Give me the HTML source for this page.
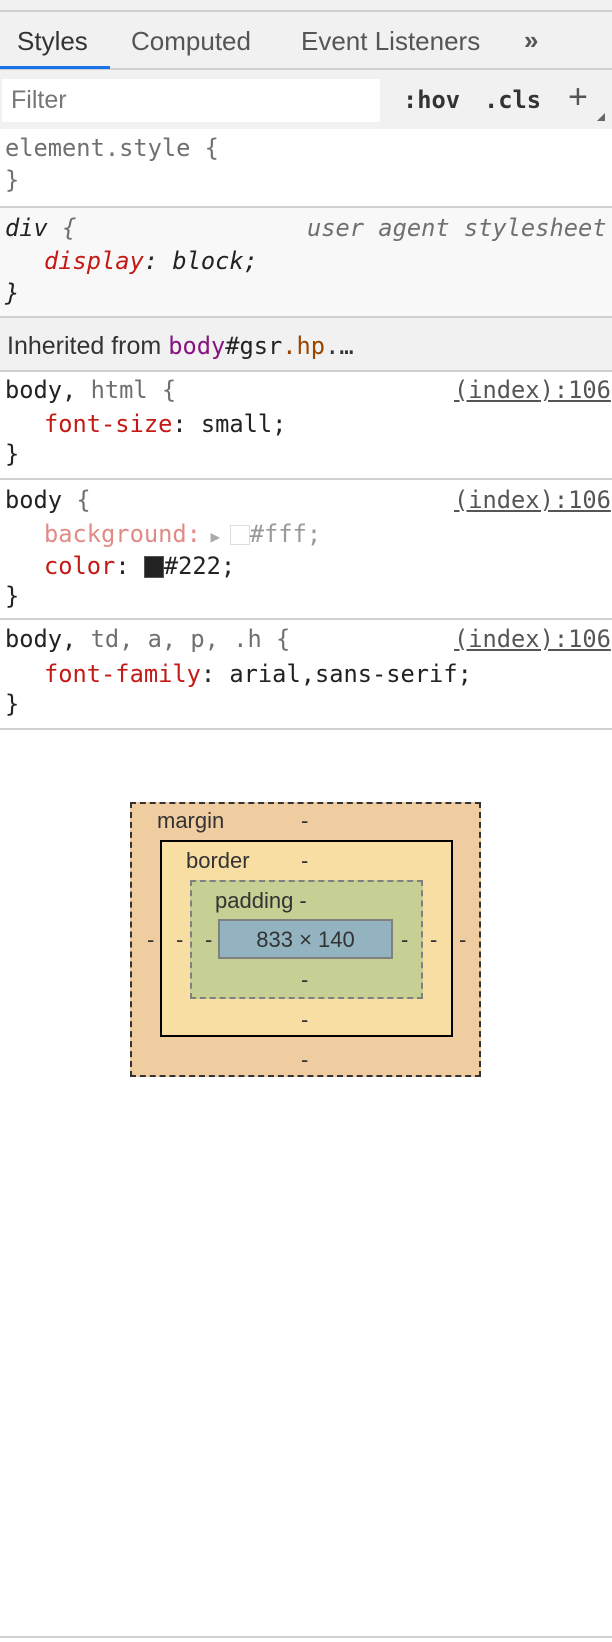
<!DOCTYPE html>
<html><head><meta charset="utf-8"><style>
*{margin:0;padding:0;box-sizing:border-box}
body{width:612px;height:1642px;background:#fff;position:relative;overflow:hidden;font-family:"Liberation Sans",Arial,sans-serif;color:#222}
.a{position:absolute;white-space:pre}
.m{font-family:"DejaVu Sans Mono","Liberation Mono",monospace;font-size:23.7px;line-height:32px}
.hl{position:absolute;left:0;width:612px;height:2px;background:#d0d0d0}
.red{color:#c41a16}.g{color:#707070}.k{color:#222}
.idx{color:#555;text-decoration:underline}
.bm{position:absolute;font-size:22px;color:#333;text-align:center}
</style></head><body>
<div class="a" style="left:0;top:0;width:612px;height:69px;background:#f1f1f1"></div>
<div class="hl" style="top:10px;height:2px;background:#cfcfcf"></div>
<div class="hl" style="top:68px"></div>
<div class="a" style="left:0;top:66px;width:110px;height:3px;background:#1a73e8"></div>
<div class="a" style="left:17px;top:26px;font-size:26px;color:#333">Styles</div>
<div class="a" style="left:131px;top:26px;font-size:26px;color:#555">Computed</div>
<div class="a" style="left:301px;top:26px;font-size:26px;color:#555">Event Listeners</div>
<div class="a" style="left:524px;top:25px;font-size:26px;font-weight:bold;color:#555">»</div>
<div class="a" style="left:0;top:70px;width:612px;height:59px;background:#f1f1f1"></div>
<div class="a" style="left:2px;top:79px;width:378px;height:43px;background:#fff"></div>
<div class="a" style="left:11px;top:86px;font-size:25px;color:#777">Filter</div>
<div class="a m" style="left:403px;top:84px;font-weight:bold;color:#333">:hov</div>
<div class="a m" style="left:484px;top:84px;font-weight:bold;color:#333">.cls</div>
<div class="a" style="left:568px;top:78px;font-size:34px;color:#555">+</div>
<div class="a" style="left:597px;top:113px;width:0;height:0;border-left:8px solid transparent;border-bottom:8px solid #666"></div>

<div class="a m g" style="left:5px;top:132px">element.style {</div>
<div class="a m g" style="left:5px;top:164px">}</div>
<div class="hl" style="top:206px"></div>
<div class="a" style="left:0;top:208px;width:612px;height:109px;background:#f8f8f8"></div>
<div class="a m" style="left:5px;top:212px;font-style:italic"><span class="k">div</span> <span class="g">{</span></div>
<div class="a m g" style="left:307px;top:212px;font-style:italic">user agent stylesheet</div>
<div class="a m" style="left:44px;top:245px;font-style:italic"><span class="red">display</span>: block;</div>
<div class="a m" style="left:5px;top:277px;font-style:italic">}</div>
<div class="hl" style="top:316px"></div>
<div class="a" style="left:0;top:318px;width:612px;height:52px;background:#f1f1f1"></div>
<div class="a" style="left:7px;top:330px;font-size:25px;color:#333">Inherited from <span class="m" style="font-size:23.7px;color:#881280">body</span><span class="m" style="font-size:23.7px;color:#222">#gsr</span><span class="m" style="font-size:23.7px;color:#994500">.hp</span><span class="m" style="font-size:23.7px">.…</span></div>
<div class="hl" style="top:370px"></div>

<div class="a m" style="left:5px;top:374px"><span class="k">body</span>, <span class="g">html {</span></div>
<div class="a m idx" style="left:454px;top:374px">(index):106</div>
<div class="a m" style="left:44px;top:408px"><span class="red">font-size</span>: small;</div>
<div class="a m" style="left:5px;top:438px">}</div>
<div class="hl" style="top:478px"></div>

<div class="a m" style="left:5px;top:484px"><span class="k">body</span> <span class="g">{</span></div>
<div class="a m idx" style="left:454px;top:484px">(index):106</div>
<div class="a m" style="left:44px;top:518px"><span style="color:#e08b85">background:</span><span style="color:#aaa;font-size:16px"> ▶ </span><span style="display:inline-block;width:20px;height:20px;border:1.5px solid #ddd;vertical-align:-3px"></span><span style="color:#999">#fff;</span></div>
<div class="a m" style="left:44px;top:550px"><span class="red">color</span>: <span style="display:inline-block;width:20px;height:22px;background:#222;border:1.5px solid #555;vertical-align:-4px"></span>#222;</div>
<div class="a m" style="left:5px;top:580px">}</div>
<div class="hl" style="top:618px"></div>

<div class="a m" style="left:5px;top:623px"><span class="k">body</span>, <span class="g">td, a, p, .h {</span></div>
<div class="a m idx" style="left:454px;top:623px">(index):106</div>
<div class="a m" style="left:44px;top:658px"><span class="red">font-family</span>: arial,sans-serif;</div>
<div class="a m" style="left:5px;top:688px">}</div>
<div class="hl" style="top:728px"></div>

<div class="a" style="left:130px;top:802px;width:351px;height:275px;background:#f0cda0;border:2px dashed #333"></div>
<div class="a" style="left:160px;top:840px;width:293px;height:197px;background:#f8dea3;border:2px solid #000"></div>
<div class="a" style="left:190px;top:880px;width:233px;height:119px;background:#c6cf94;border:2px dashed #808080"></div>
<div class="a" style="left:218px;top:919px;width:175px;height:40px;background:#93b3c0;border:2px solid #808080"></div>
<div class="bm" style="left:157px;top:808px">margin</div>
<div class="bm" style="left:301px;top:808px">-</div>
<div class="bm" style="left:186px;top:848px">border</div>
<div class="bm" style="left:301px;top:848px">-</div>
<div class="bm" style="left:215px;top:888px">padding -</div>
<div class="bm" style="left:218px;top:927px;width:175px">833 × 140</div>
<div class="bm" style="left:147px;top:927px">-</div>
<div class="bm" style="left:176px;top:927px">-</div>
<div class="bm" style="left:205px;top:927px">-</div>
<div class="bm" style="left:401px;top:927px">-</div>
<div class="bm" style="left:430px;top:927px">-</div>
<div class="bm" style="left:459px;top:927px">-</div>
<div class="bm" style="left:301px;top:967px">-</div>
<div class="bm" style="left:301px;top:1007px">-</div>
<div class="bm" style="left:301px;top:1047px">-</div>
<div class="hl" style="top:1636px"></div>
</body></html>
